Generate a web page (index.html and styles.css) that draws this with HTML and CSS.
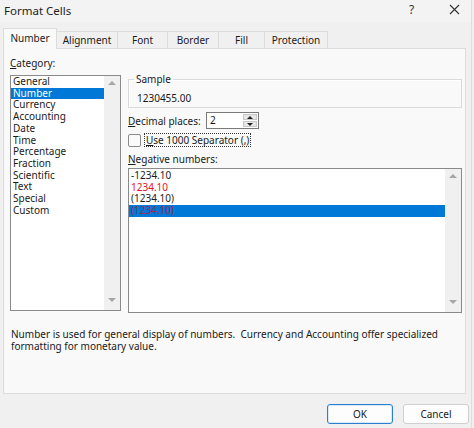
FILE: index.html
```html
<!DOCTYPE html>
<html lang="en">
<head>
<meta charset="utf-8">
<title>Format Cells</title>
<link rel="stylesheet" href="styles.css">
</head>
<body>
<div class="dialog">
  <div class="titlebar">
    <span class="title">Format Cells</span>
    <span class="help">?</span>
    <span class="close"><svg width="11" height="11" viewBox="0 0 11 11"><path d="M1 1 L10 10 M10 1 L1 10" stroke="#333" stroke-width="1.1" fill="none"/></svg></span>
  </div>
  <div class="tabs">
    <div class="tab active">Number</div>
    <div class="tab t-align">Alignment</div>
    <div class="tab t-font">Font</div>
    <div class="tab t-border">Border</div>
    <div class="tab t-fill">Fill</div>
    <div class="tab t-prot">Protection</div>
  </div>
  <div class="panel">
    <div class="main">
      <div class="cat-col">
        <div class="label"><u>C</u>ategory:</div>
        <div class="listbox cat">
          <div class="items">
            <div class="item">General</div>
            <div class="item sel">Number</div>
            <div class="item">Currency</div>
            <div class="item">Accounting</div>
            <div class="item">Date</div>
            <div class="item">Time</div>
            <div class="item">Percentage</div>
            <div class="item">Fraction</div>
            <div class="item">Scientific</div>
            <div class="item">Text</div>
            <div class="item">Special</div>
            <div class="item">Custom</div>
          </div>
          <div class="vscroll">
            <span class="arrow up"></span>
            <span class="arrow down"></span>
          </div>
        </div>
      </div>
      <div class="right-col">
        <fieldset class="sample">
          <legend>Sample</legend>
          <div class="sample-val">1230455.00</div>
        </fieldset>
        <div class="dec-row">
          <span class="dec-label"><u>D</u>ecimal places:</span>
          <div class="spin">
            <span class="spin-val">2</span>
            <div class="spin-btns">
              <span class="sbtn"><span class="tri up"></span></span>
              <span class="sbtn"><span class="tri down"></span></span>
            </div>
          </div>
        </div>
        <div class="sep-row">
          <span class="checkbox"></span>
          <span class="focus"><u>U</u>se 1000 Separator (,)</span>
        </div>
        <div class="label neg-label"><u>N</u>egative numbers:</div>
        <div class="listbox neg">
          <div class="items">
            <div class="item">-1234.10</div>
            <div class="item red">1234.10</div>
            <div class="item">(1234.10)</div>
            <div class="item sel redsel">(1234.10)</div>
          </div>
          <div class="vscroll">
            <span class="arrow up"></span>
            <span class="arrow down"></span>
          </div>
        </div>
      </div>
    </div>
    <p class="desc">Number is used for general display of numbers.&nbsp; Currency and Accounting offer specialized formatting for monetary value.</p>
  </div>
  <div class="footer">
    <button class="btn ok">OK</button>
    <button class="btn">Cancel</button>
  </div>
</div>
</body>
</html>
```

FILE: styles.css
```css
html, body {
  margin: 0;
  padding: 0;
}
body {
  width: 474px;
  height: 428px;
  background: #f0f0f0;
  font-family: "Noto Sans", "Open Sans", sans-serif;
  font-size: 10px;
  color: #1a1a1a;
  overflow: hidden;
}
.dialog {
  width: 471px;
  height: 428px;
  background: #f0f0f0;
  border-right: 1px solid #dedede;
  display: flex;
  flex-direction: column;
}
.titlebar {
  height: 22px;
  background: #f3f3f3;
  display: flex;
  align-items: center;
  padding: 0 0 0 4px;
}
.title {
  font-size: 11.5px;
  color: #222;
  flex: 1;
  margin-top: -2px;
}
.help {
  width: 16px;
  font-size: 12px;
  color: #333;
  margin-right: 24px;
  margin-top: -3px;
}
.close {
  width: 22px;
  display: flex;
  margin-top: -4px;
}
.tabs {
  display: flex;
  align-items: flex-end;
  height: 26px;
  padding-left: 3px;
  position: relative;
  z-index: 1;
}
.tab {
  height: 16px;
  line-height: 17px;
  border: 1px solid #dcdcdc;
  border-bottom: none;
  border-left: none;
  background: #f0f0f0;
  text-align: center;
  color: #1a1a1a;
}
.tab.active {
  line-height: 19px;
  width: 52px;
  border-left: 1px solid #dcdcdc;
  background: #f9f9f9;
  margin-bottom: -1px;
  height: 20px;
}
.t-align { width: 60px; }
.t-font { width: 49px; }
.t-border { width: 50px; }
.t-fill { width: 45px; }
.t-prot { width: 62px; }
.panel {
  margin-left: 3px;
  width: 463px;
  height: 346px;
  background: #f9f9f9;
  border: 1px solid #dcdcdc;
  box-sizing: border-box;
}
.main {
  display: flex;
  padding: 9px 0 0 6px;
  gap: 7px;
}
.cat-col {
  width: 111px;
  display: flex;
  flex-direction: column;
}
.label {
  height: 11px;
  line-height: 11px;
  margin-bottom: 6px;
}
.listbox {
  background: #fff;
  border: 1px solid #8a8a8a;
  display: flex;
  box-sizing: border-box;
}
.listbox.cat {
  height: 236px;
}
.items {
  flex: 1;
  padding-top: 0;
}
.neg .items {
  padding-top: 1px;
}
.item {
  height: 11.73px;
  line-height: 11.73px;
  padding-left: 2px;
  white-space: nowrap;
}
.item.sel {
  background: #0078d7;
  color: #fff;
}
.item.red {
  color: #e8102a;
}
.item.redsel {
  color: #9a2a56;
}
.vscroll {
  width: 16px;
  background: #f0f0f0;
  display: flex;
  flex-direction: column;
  justify-content: space-between;
  align-items: center;
  padding: 5px 0 8px;
}
.arrow {
  width: 0;
  height: 0;
  border-left: 4px solid transparent;
  border-right: 4px solid transparent;
}
.arrow.up {
  border-bottom: 4px solid #a6a6a6;
}
.arrow.down {
  border-top: 4px solid #a6a6a6;
}
.right-col {
  width: 334px;
  display: flex;
  flex-direction: column;
  padding-top: 16px;
}
.sample {
  margin: 0;
  padding: 0 0 0 8px;
  height: 34px;
  border: 1px solid #dadada;
  box-shadow: inset 1px 1px 0 #fff;
  box-sizing: border-box;
}
.sample legend {
  padding: 0 2px;
  margin-left: -3px;
  line-height: 11px;
}
.sample-val {
  line-height: 14px;
  padding-top: 6px;
}
.dec-row {
  display: flex;
  align-items: center;
  margin-top: 4px;
  height: 17px;
}
.dec-label {
  width: 78px;
}
.spin {
  width: 53px;
  height: 17px;
  border: 1px solid #7a7a7a;
  background: #fff;
  box-sizing: border-box;
  display: flex;
}
.spin-val {
  flex: 1;
  padding-left: 3px;
  line-height: 15px;
}
.spin-btns {
  width: 14px;
  display: flex;
  flex-direction: column;
  gap: 1px;
  padding: 1px 1px 1px 0;
}
.sbtn {
  flex: 1;
  background: #e6e6e6;
  border: 1px solid #c8c8c8;
  display: flex;
  align-items: center;
  justify-content: center;
}
.tri {
  width: 0;
  height: 0;
  border-left: 3px solid transparent;
  border-right: 3px solid transparent;
}
.tri.up { border-bottom: 3px solid #222; }
.tri.down { border-top: 3px solid #222; }
.sep-row {
  display: flex;
  align-items: center;
  margin-top: 4px;
  height: 14px;
  gap: 3px;
}
.checkbox {
  width: 11px;
  height: 11px;
  border: 1px solid #8a8a8a;
  border-radius: 2px;
  background: #fafafa;
}
.focus {
  border: 1px dotted #333;
  padding: 0 1px;
  line-height: 12px;
}
.neg-label {
  margin-top: 7px;
  margin-bottom: 3px;
}
.listbox.neg {
  height: 145px;
}
.desc {
  margin: 16px 0 0 7px;
  width: 440px;
  line-height: 11.7px;
}
.footer {
  display: flex;
  justify-content: flex-end;
  gap: 10px;
  padding: 10px 2px 0 0;
}
.btn {
  width: 66px;
  height: 20px;
  font-family: inherit;
  font-size: 10px;
  color: #1a1a1a;
  background: #fdfdfd;
  border: 1px solid #d0d0d0;
  border-radius: 3px;
  padding: 0;
}
.btn.ok {
  border: 1px solid #2b7fd0;
  box-shadow: inset 0 0 0 1px #d8e8f6;
}
```
